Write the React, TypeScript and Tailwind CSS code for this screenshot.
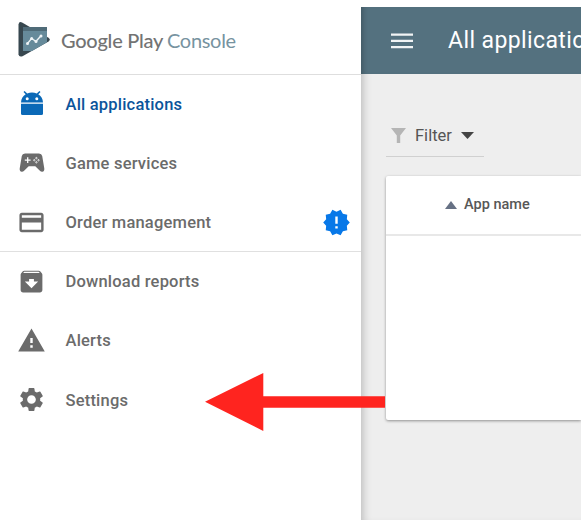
import type { ReactNode } from "react";
import { MdArchive, MdCreditCard, MdNewReleases, MdSettings, MdWarning } from "react-icons/md";

function Logo() {
  return (
    <svg width="34" height="38" viewBox="0 0 34 38" className="shrink-0">
      <path d="M1.500 3.500Q2-.2 5.500 1.700L31.500 16.700Q34 18.500 31.500 20.400L5.500 35.200Q2 36.500 1.500 33.300Z" fill="#37474f" />
      <path d="M6 6h24v15.200L15 30H6Z" fill="#668a9a" />
      <path d="M6 6h24v4H6Z" fill="#4f6b78" />
      <path d="M10.500 22.500l4-5 4.500 2.800 5.500-6" fill="none" stroke="#eef3f5" strokeWidth="1.300" />
      <g fill="#eef3f5">
        <circle cx="10.500" cy="22.500" r="1.500" />
        <circle cx="14.700" cy="17.400" r="1.500" />
        <circle cx="19" cy="20.600" r="1.500" />
        <circle cx="24" cy="15" r="1.500" />
      </g>
    </svg>
  );
}

function Robot() {
  return (
    <svg width="24" height="26" viewBox="0 0 24 26" fill="#0b69b7">
      <path d="M1 11.500C1.200 7.800 3 5 5.700 3.300L3.500 1l1.100-.9 2.600 2.500a12 12 0 0 1 9.600 0L19.400.1l1.100.9-2.200 2.300C21 5 22.800 7.800 23 11.500Z" />
      <path d="M1 12.700h22v9.800a1.500 1.500 0 0 1-1.500 1.500h-19A1.500 1.500 0 0 1 1 22.500Z" />
      <circle cx="7.200" cy="7.700" r="1.500" fill="#fff" />
      <circle cx="16.800" cy="7.700" r="1.500" fill="#fff" />
    </svg>
  );
}

function Gamepad() {
  return (
    <svg width="26" height="20" viewBox="0 0 26 20" className="-mt-px">
      <path d="M6 .5h14q2.700 0 3.200 2.600l2.100 12.500q.3 3-2 3.200-1.400.1-2.400-1l-4.600-4.600H9.700l-4.600 4.600q-1 1.100-2.400 1-2.300-.2-2-3.200L2.800 3.100Q3.300.5 6 .5Z" fill="#6b6b6b" />
      <path d="M8.700 4.300v5.800M5.800 7.200h5.800" stroke="#fff" strokeWidth="1.300" />
      <g fill="none" stroke="#fff" strokeWidth=".8">
        <circle cx="17.400" cy="5.100" r=".7" />
        <circle cx="17.400" cy="9.300" r=".7" />
        <circle cx="15.300" cy="7.200" r=".7" />
        <circle cx="19.500" cy="7.200" r=".7" />
      </g>
    </svg>
  );
}

function NavItem({ icon, label, active, badge }: { icon: ReactNode; label: string; active?: boolean; badge?: ReactNode }) {
  return (
    <li className={`flex h-[59.2px] items-center pl-[17px] pr-[10px] text-[16.5px] font-medium ${active ? "text-[#0b549b]" : "text-[#6b6b6b]"}`}>
      <span className="flex w-[29px] justify-center">{icon}</span>
      <span className="ml-[19.5px] grow pt-[2px] tracking-[0.2px]">{label}</span>
      {badge}
    </li>
  );
}

export default function App() {
  return (
    <div className="relative flex h-[520px] w-[581px] overflow-hidden bg-white font-['Roboto',sans-serif]">
      <aside className="z-10 h-full w-[361px] shrink-0 bg-white">
        <header className="flex h-[74.500px] items-center border-b border-[#dedede] pl-[17px] pt-[6px] font-['Lato',sans-serif] text-[20px]">
          <Logo />
          <span className="ml-[10px] w-[106px] whitespace-nowrap font-medium tracking-[-0.25px] text-[#737373]">Google Play</span>
          <span className="tracking-[-0.3px] text-[#7793a0]">Console</span>
        </header>
        <ul className="h-[177.500px] border-b border-[#e0e0e0]">
          <NavItem active icon={<Robot />} label="All applications" />
          <NavItem icon={<Gamepad />} label="Game services" />
          <NavItem icon={<MdCreditCard size={29} />} label="Order management" badge={<MdNewReleases size={29} color="#0878e8" />} />
        </ul>
        <ul>
          <NavItem icon={<MdArchive size={29} />} label="Download reports" />
          <NavItem icon={<MdWarning size={29} />} label="Alerts" />
          <NavItem icon={<MdSettings size={29} />} label="Settings" />
        </ul>
      </aside>

      <main className="mt-[7px] w-[220px] bg-[#eee] shadow-[inset_8px_0_8px_-6px_rgba(0,0,0,0.22)]">
        <div className="flex h-[67px] items-center overflow-hidden bg-[#54717f] pl-[30px] text-[23px] text-white shadow-[inset_7px_0_7px_-6px_rgba(0,0,0,0.3)]">
          <svg width="22" height="16" className="shrink-0" fill="#f1f4f5">
            <path d="M0 .5h22v2.300H0zM0 6.700h22V9H0zM0 12.900h22v2.300H0z" />
          </svg>
          <h1 className="ml-[35px] whitespace-nowrap pt-[2px] tracking-[0.4px]">All applications</h1>
        </div>
        <div className="ml-[25px] mt-[41px] flex h-[42px] w-[98px] items-center border-b border-[#d0d0d0] pl-[5px] text-[16.500px] text-[#555]">
          <svg width="15" height="15" fill="#b5b5b5"><path d="M0 0h15L9.200 7.500V15H5.800V7.500Z" /></svg>
          <span className="ml-[9px] pt-[2px]">Filter</span>
          <svg width="13" height="7" className="ml-[9px]" fill="#444"><path d="M0 0h13L6.500 7Z" /></svg>
        </div>
        <section className="ml-[25px] mt-[19px] h-[244px] rounded-l-[2px] bg-white shadow-[0_1px_3px_rgba(0,0,0,0.4)]">
          <div className="flex h-[60px] items-center border-b-2 border-[#e8e8e8] pl-[59px] text-[14.500px] font-medium text-[#575757]">
            <svg width="12" height="8" fill="#667184"><path d="M0 8L6 0l6 8Z" /></svg>
            <span className="ml-[7px]">App name</span>
          </div>
        </section>
      </main>

      {/* Callout pointing at the Settings entry */}
      <svg width="180" height="58" className="absolute left-[205px] top-[373px] z-20" fill="#ff241f">
        <path d="M0 28.800L58.300 0v23.300H180v11.500H58.300V58Z" />
      </svg>
    </div>
  );
}
